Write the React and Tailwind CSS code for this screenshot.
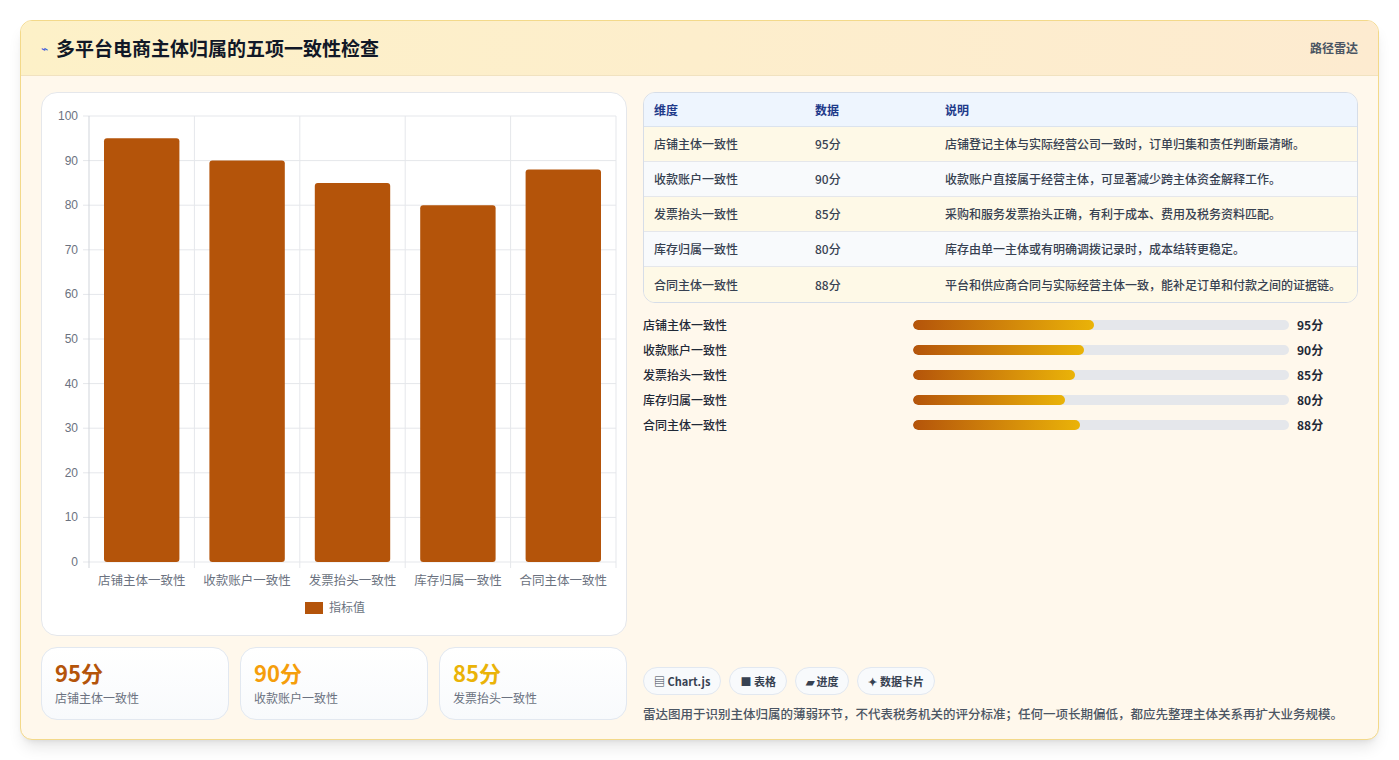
const F = { fontFamily: '"Noto Sans CJK SC", "Noto Sans", sans-serif' };
const data = [
  ["店铺主体一致性", 95, "店铺登记主体与实际经营公司一致时，订单归集和责任判断最清晰。"],
  ["收款账户一致性", 90, "收款账户直接属于经营主体，可显著减少跨主体资金解释工作。"],
  ["发票抬头一致性", 85, "采购和服务发票抬头正确，有利于成本、费用及税务资料匹配。"],
  ["库存归属一致性", 80, "库存由单一主体或有明确调拨记录时，成本结转更稳定。"],
  ["合同主体一致性", 88, "平台和供应商合同与实际经营主体一致，能补足订单和付款之间的证据链。"],
];

function Chart() {
  const x0 = 47, x1 = 574, y0 = 23, y1 = 469;
  const h = y1 - y0, cw = (x1 - x0) / 5;
  return (
    <svg width="586" height="544" className="block">
      {Array.from({ length: 11 }).map((_, i) => {
        const y = y1 - (h * i) / 10;
        return (
          <g key={i}>
            <line x1={x0 - 6} x2={x1} y1={y} y2={y} stroke="#e5e7eb" />
            <text x={x0 - 11} y={y + 4} textAnchor="end" fontSize="12" fill="#6b7280" fontFamily="Liberation Sans, sans-serif">{i * 10}</text>
          </g>
        );
      })}
      {Array.from({ length: 6 }).map((_, i) => (
        <line key={i} x1={x0 + cw * i} x2={x0 + cw * i} y1={y0} y2={y1 + 6} stroke={i === 0 ? "#d1d5db" : "#e5e7eb"} />
      ))}
      {data.map(([n, v], i) => {
        const bh = (h * v) / 100;
        return (
          <g key={n}>
            <rect x={x0 + cw * i + 15} y={y1 - bh} width={cw - 30} height={bh} rx="3" fill="#b4540a" />
            <text x={x0 + cw * i + cw / 2} y={y1 + 23} textAnchor="middle" fontSize="12.5" fill="#6b7280" style={F}>{n}</text>
          </g>
        );
      })}
      <rect x="263" y="509" width="18" height="12" fill="#b4540a" />
      <text x="287" y="519" fontSize="12" fill="#6b7280" style={F}>指标值</text>
    </svg>
  );
}

export default function App() {
  const cards = [["95分", "text-[#b4540a]", data[0][0]], ["90分", "text-[#f59e0b]", data[1][0]], ["85分", "text-[#eab308]", data[2][0]]];
  return (
    <div className="w-[1399px] h-[760px] bg-white pt-5 px-5" style={F}>
      <div className="h-[720px] rounded-xl border border-[#f3d98a] bg-[#fff8ec] shadow-lg overflow-hidden flex flex-col">
        <div className="h-[55px] shrink-0 bg-gradient-to-r from-[#fdf1c8] to-[#fdebd0] border-b border-[#f1e2c0] flex items-center justify-between px-5">
          <div className="flex items-center gap-2">
            <span className="text-[#3b5bdb] text-xs">⌁</span>
            <span className="text-[19px] font-bold text-[#111827]">多平台电商主体归属的五项一致性检查</span>
          </div>
          <span className="text-xs font-semibold text-[#4b5563]">路径雷达</span>
        </div>
        <div className="flex-1 flex gap-4 px-5 pt-4 pb-4">
          <div className="w-[586px] flex flex-col gap-[11px]">
            <div className="h-[544px] rounded-2xl bg-white border border-[#e5e7eb]"><Chart /></div>
            <div className="grid grid-cols-3 gap-[11px]">
              {cards.map(([v, c, l]) => (
                <div key={l} className="h-[73px] rounded-2xl border border-[#e2e8f0] bg-gradient-to-b from-white to-[#f8fafc] px-[13px] pt-[10px]">
                  <div className={`text-[22px] leading-7 font-bold ${c}`}>{v}</div>
                  <div className="text-xs text-[#6b7280] mt-1">{l}</div>
                </div>
              ))}
            </div>
          </div>
          <div className="w-[718px] flex flex-col">
            <div className="rounded-xl border border-[#d6dde8] overflow-hidden text-xs text-[#374151]">
              <div className="h-[34px] flex items-center bg-[#eef5fe] font-bold text-[#1e3a8a] border-b border-[#dbe3ee]">
                <div className="w-[171px] pl-[10px]">维度</div><div className="w-[130px]">数据</div><div>说明</div>
              </div>
              {data.map(([n, v, d], i) => (
                <div key={n} className={`h-[35px] flex items-center font-medium ${i % 2 ? "bg-[#f8fafc]" : "bg-[#fef9e7]"} ${i < 4 ? "border-b border-[#e5e7eb]" : ""}`}>
                  <div className="w-[171px] pl-[10px]">{n}</div><div className="w-[130px]">{v}分</div><div>{d}</div>
                </div>
              ))}
            </div>
            <div className="mt-[13px] flex flex-col gap-[7px]">
              {data.map(([n, v]) => (
                <div key={n} className="h-[18px] flex items-center text-xs font-medium text-[#1f2937]">
                  <div className="w-[270px]">{n}</div>
                  <div className="w-[376px] h-[10px] rounded-full bg-[#e5e7eb] overflow-hidden">
                    <div className="h-full rounded-full bg-gradient-to-r from-[#b4540a] to-[#eab308]" style={{ width: `${v * 0.506}%` }} />
                  </div>
                  <div className="ml-2 font-bold">{v}分</div>
                </div>
              ))}
            </div>
            <div className="flex-1" />
            <div className="flex gap-2 text-[11px] font-bold text-[#374151]">
              {["▤ Chart.js", "■ 表格", "▰ 进度", "✦ 数据卡片"].map(t => (
                <span key={t} className="h-7 px-[10px] flex items-center rounded-full border border-[#e2e8f0] bg-[#f8fafc]">{t}</span>
              ))}
            </div>
            <p className="mt-[10px] text-[12.5px] leading-[18px] font-medium text-[#4b5563]">雷达图用于识别主体归属的薄弱环节，不代表税务机关的评分标准；任何一项长期偏低，都应先整理主体关系再扩大业务规模。</p>
          </div>
        </div>
      </div>
    </div>
  );
}
